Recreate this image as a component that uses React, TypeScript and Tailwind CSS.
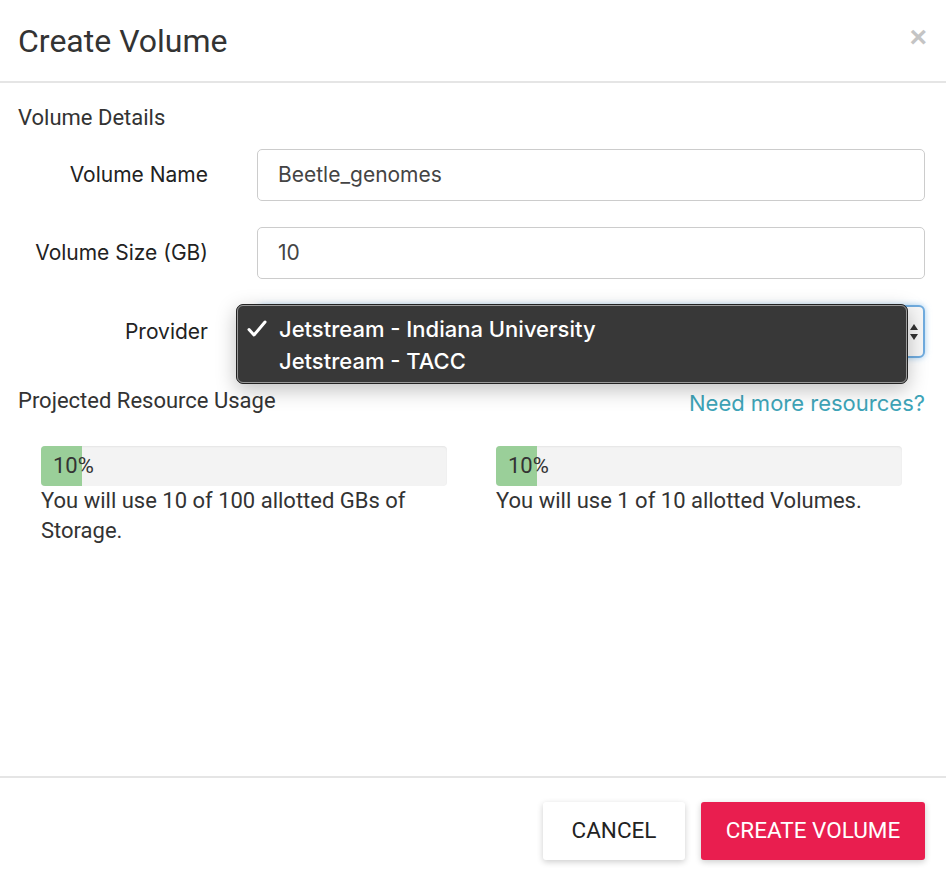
import React from "react";

function Bar({ text, pct }: { text: string; pct: number }) {
  return (
    <div className="flex flex-col w-[406px]">
      <div className="relative h-[40px] w-[406px] rounded-[4px] bg-[#f3f3f3] shadow-[inset_0_1px_2px_rgba(0,0,0,0.06)] overflow-hidden">
        <div className="absolute left-0 top-0 h-full bg-[#9acf99]" style={{ width: `${pct}%` }} />
        <span className="relative block pl-[12px] leading-[40px] text-[22px] text-[#333]">{pct}%</span>
      </div>
      <p className="text-[22px] leading-[30px] text-[#333]">{text}</p>
    </div>
  );
}

function Field({ label, value }: { label: string; value: string }) {
  return (
    <div className="flex items-center">
      <label className="w-[190px] text-right text-[21px] text-[#222] font-[Inter,'Noto_Sans',sans-serif]">{label}</label>
      <div className="ml-[49px] flex-1 h-[52px] border border-[#ccc] rounded-[5px] flex items-center px-[20px] text-[21px] text-[#444] font-[Inter,'Noto_Sans',sans-serif]">{value}</div>
    </div>
  );
}

export default function App() {
  return (
    <div className="w-[946px] h-[878px] bg-white flex flex-col relative font-[Roboto,'Liberation_Sans',sans-serif]">
      <div className="h-[83px] flex items-center justify-between px-[18px] border-b-2 border-[#e5e5e5]">
        <h1 className="text-[32px] text-[#333] font-normal">Create Volume</h1>
        <span className="text-[30px] font-bold text-[#c4c4c4] leading-none mr-[1px] -mt-[8px] font-['Liberation_Sans',sans-serif]">×</span>
      </div>
      <div className="flex-1 pl-[18px] pr-[21px] pt-[21px]">
        <div className="text-[22px] text-[#333] leading-[28px]">Volume Details</div>
        <div className="mt-[17px] flex flex-col gap-[26px]">
          <Field label="Volume Name" value="Beetle_genomes" />
          <Field label="Volume Size (GB)" value="10" />
          <div className="flex items-center relative">
            <label className="w-[190px] text-right text-[21px] text-[#222] font-[Inter,'Noto_Sans',sans-serif]">Provider</label>
            <div className="ml-[49px] flex-1 h-[53px] border-2 border-[#70acdf] rounded-[6px] bg-[#f7f7f7] shadow-[0_0_6px_rgba(102,175,233,0.6)] flex items-center justify-end pr-[4px]">
              <svg width="10" height="22" viewBox="0 0 10 22">
                <path d="M1 9 L5 3 L9 9 Z" fill="#333" />
                <path d="M1 13 L5 19 L9 13 Z" fill="#333" />
              </svg>
            </div>
            <div className="absolute left-[218px] top-[-1px] w-[672px] h-[80px] rounded-[7px] border border-[#222] bg-[#383838] shadow-[0_6px_20px_rgba(0,0,0,0.25)]">
              <div className="h-full w-full rounded-[6px] border border-[#9a9a9a] pt-[7px] font-[Inter,'Noto_Sans',sans-serif]">
                <div className="flex items-center h-[32px] text-white text-[22px] font-medium">
                  <svg width="20" height="18" viewBox="0 0 20 18" className="ml-[9px] mr-[12px]">
                    <path d="M2 9.5 L7 15 L18 2" stroke="white" strokeWidth="3" fill="none" strokeLinecap="round" strokeLinejoin="round" />
                  </svg>
                  <span>Jetstream - Indiana University</span>
                </div>
                <div className="flex items-center h-[32px] text-white text-[22px] font-medium pl-[41px]">
                  Jetstream - TACC
                </div>
              </div>
            </div>
          </div>
        </div>
        <div className="mt-[28px] flex items-end justify-between leading-[30px]">
          <span className="text-[22px] text-[#333]">Projected Resource Usage</span>
          <span className="text-[22px] text-[#3ea4b8] -mb-[2px] font-[Inter,'Noto_Sans',sans-serif]">Need more resources?</span>
        </div>
        <div className="mt-[30px] flex gap-[49px] pl-[23px]">
          <Bar pct={10} text="You will use 10 of 100 allotted GBs of Storage." />
          <Bar pct={10} text="You will use 1 of 10 allotted Volumes." />
        </div>
      </div>
      <div className="h-[102px] border-t-2 border-[#e5e5e5] flex items-start justify-end gap-[16px] pr-[21px] pt-[24px]">
        <button className="h-[58px] w-[142px] rounded-[3px] bg-white text-[#222] text-[22.5px] shadow-[0_2px_6px_rgba(0,0,0,0.2)]">CANCEL</button>
        <button className="h-[58px] w-[224px] rounded-[3px] bg-[#e91e4f] text-white text-[22.5px] shadow-[0_2px_6px_rgba(0,0,0,0.2)]">CREATE VOLUME</button>
      </div>
    </div>
  );
}
